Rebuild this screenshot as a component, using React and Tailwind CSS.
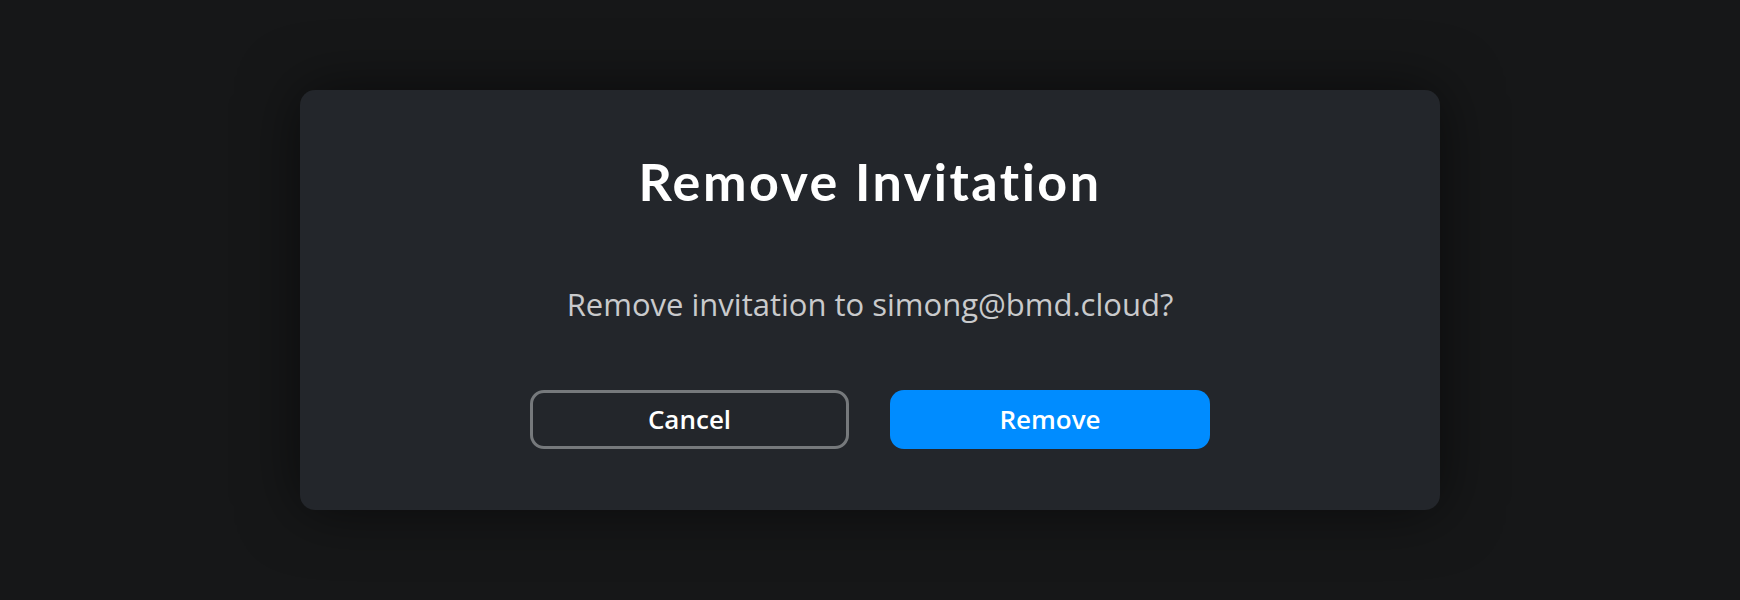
import React from "react";

const RemoveInvitationDialog = ({ email }) => {
  return (
    <div className="w-[1140px] h-[420px] rounded-[15px] bg-[#23262b] shadow-[0_0_60px_rgba(0,0,0,0.55)] flex flex-col items-center pt-[60px]">
      <h1 className="h-[62px] leading-[62px] text-[52px] tracking-[2.5px] font-bold text-white font-['Lato',sans-serif]">
        Remove Invitation
      </h1>
      <p className="mt-[70px] h-[44px] leading-[44px] text-[31px] text-[#c9cacc] font-['Open_Sans',sans-serif]">
        Remove invitation to {email}?
      </p>
      <div className="mt-[64px] flex gap-[41px]">
        <button className="w-[319px] h-[59px] rounded-[14px] border-[3px] border-[#76797c] text-white text-[26px] font-semibold font-['Open_Sans',sans-serif]">
          Cancel
        </button>
        <button className="w-[320px] h-[59px] rounded-[14px] bg-[#008cff] text-white text-[26px] font-semibold font-['Open_Sans',sans-serif]">
          Remove
        </button>
      </div>
    </div>
  );
};

export default function App() {
  return (
    <div className="w-[1740px] h-[600px] bg-[#161718] flex items-center justify-center">
      <RemoveInvitationDialog email="simong@bmd.cloud" />
    </div>
  );
}
